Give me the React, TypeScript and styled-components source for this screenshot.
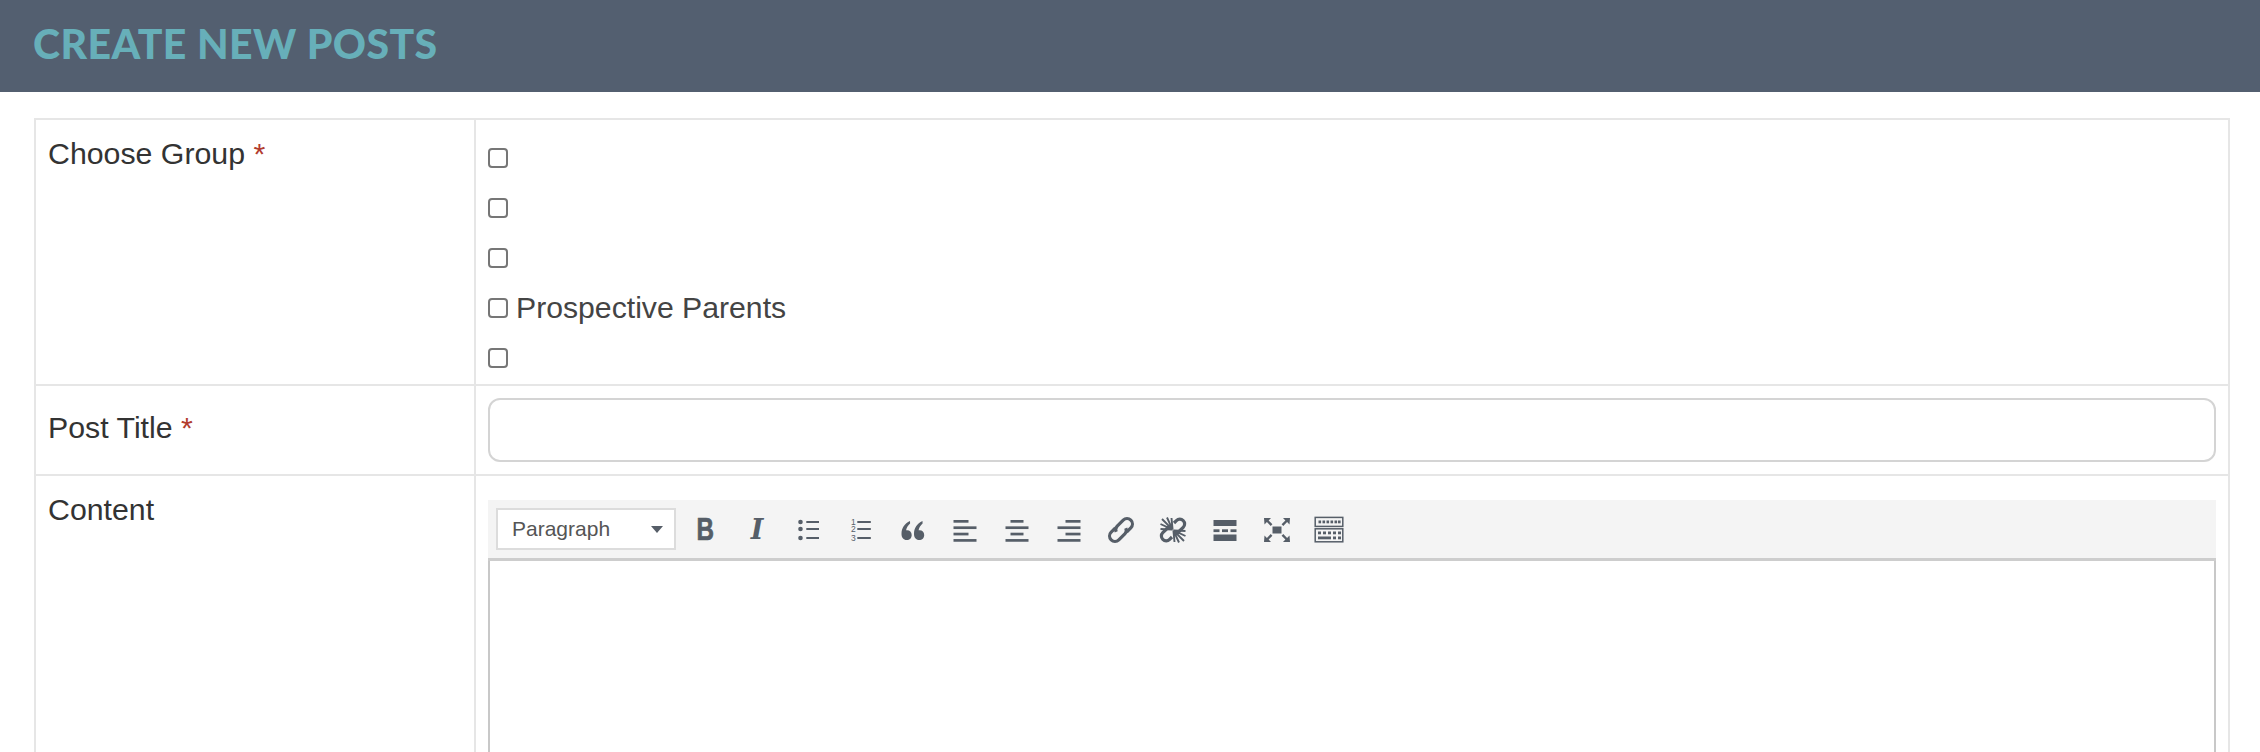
import React from "react";
import styled, { createGlobalStyle } from "styled-components";

const Global = createGlobalStyle`
  html, body { margin: 0; padding: 0; height: 752px; overflow: hidden; background: #fff; }
  body { font-family: "Liberation Sans", Arial, sans-serif; color: #333; }
`;

const Page = styled.div`
  height: 752px;
  overflow: hidden;
  display: flex;
  flex-direction: column;
`;

const Banner = styled.header`
  height: 92px;
  flex: none;
  background: #535f70;
  display: flex;
  align-items: center;
  padding-left: 33px;
`;

const Title = styled.h1`
  margin: 0 0 6px;
  font-family: "Lato", sans-serif;
  font-weight: 900;
  font-size: 41px;
  line-height: 1;
  color: #67afb9;
  text-transform: uppercase;
  letter-spacing: 0.4px;
`;

const FormTable = styled.div`
  margin: 26px 30px 0 34px;
  flex: 1;
  display: grid;
  grid-template-columns: 440px 1fr;
  grid-template-rows: 266px 90px 1fr;
  border: solid #e6e6e6;
  border-width: 2px 2px 0 2px;
  min-height: 0;
`;

const LabelCell = styled.div<{ $top: number; $last?: boolean }>`
  padding: ${(p) => p.$top}px 0 0 12px;
  border-right: 2px solid #e6e6e6;
  border-bottom: ${(p) => (p.$last ? "none" : "2px solid #e6e6e6")};
  font-size: 30.3px;
  line-height: 36px;
  color: #333;
`;

const FieldCell = styled.div<{ $top: number; $last?: boolean }>`
  padding: ${(p) => p.$top}px 12px 0 12px;
  border-bottom: ${(p) => (p.$last ? "none" : "2px solid #e6e6e6")};
  min-width: 0;
`;

const Required = styled.span`
  color: #b23c2e;
`;

const CheckRow = styled.label`
  display: flex;
  align-items: center;
  height: 50px;
  font-size: 30.2px;
  color: #444;
  gap: 8px;
`;

const CheckBox = styled.input.attrs({ type: "checkbox" })`
  appearance: none;
  margin: 0;
  width: 20px;
  height: 20px;
  box-sizing: border-box;
  border: 2px solid #767676;
  border-radius: 4px;
  background: #fff;
`;

const TitleInput = styled.input`
  display: block;
  width: 100%;
  height: 64px;
  box-sizing: border-box;
  border: 2px solid #d4d4d4;
  border-radius: 12px;
  background: #fff;
  outline: none;
`;

const EditorCell = styled.div`
  padding: 24px 12px 0 12px;
  display: flex;
  flex-direction: column;
  min-height: 0;
`;

const Toolbar = styled.div`
  height: 61px;
  box-sizing: border-box;
  flex: none;
  background: #f4f4f4;
  display: flex;
  align-items: center;
  padding-left: 8px;
  border-bottom: 3px solid #cdcdcd;
`;

const FormatSelect = styled.div`
  width: 180px;
  height: 42px;
  box-sizing: border-box;
  flex: none;
  margin-right: 3px;
  background: #fff;
  border: 2px solid #dcdcdc;
  display: flex;
  align-items: center;
  justify-content: space-between;
  padding: 0 11px 0 14px;
  font-size: 21px;
  color: #555;
`;

const Caret = styled.span`
  width: 0;
  height: 0;
  border-left: 6px solid transparent;
  border-right: 6px solid transparent;
  border-top: 7px solid #565e68;
`;

const ToolButton = styled.div`
  width: 52px;
  height: 32px;
  flex: none;
  margin-top: 2px;
  display: flex;
  align-items: center;
  justify-content: center;
  color: #565e68;
  svg { display: block; }
`;

const BoldGlyph = styled.span`
  display: inline-block;
  font-family: "Liberation Sans", sans-serif;
  font-weight: 700;
  font-size: 31px;
  line-height: 32px;
  transform: scaleX(0.78);
  -webkit-text-stroke: 0.7px currentColor;
`;

const ItalicGlyph = styled.span`
  font-family: "DejaVu Serif", serif;
  font-weight: 700;
  font-style: italic;
  font-size: 27px;
  line-height: 32px;
`;

const EditorBody = styled.div`
  flex: 1;
  border: 2px solid #c8c8c8;
  border-top: none;
  border-bottom: none;
  background: #fff;
`;

const Icon = ({ children }: { children: React.ReactNode }) => (
  <svg width="32" height="32" viewBox="0 0 32 32" fill="currentColor">{children}</svg>
);

const Bars = ({ rows }: { rows: [number, number][] }) => (
  <Icon>
    {rows.map(([x, w], i) => (
      <rect key={i} x={x} y={6 + i * 6.35} width={w} height={2.7} />
    ))}
  </Icon>
);

const UlIcon = () => (
  <Icon>
    {[8, 15, 24].map((y) => (
      <g key={y}>
        <circle cx={7.5} cy={y} r={2.3} />
        <rect x={13.3} y={y - 1} width={12.7} height={2} />
      </g>
    ))}
  </Icon>
);

const OlIcon = () => (
  <Icon>
    {[8, 15, 24].map((y, i) => (
      <g key={y}>
        <text x={6} y={y + 3} fontSize="8.5" fontFamily="Liberation Sans, sans-serif">{i + 1}</text>
        <rect x={12.3} y={y - 1} width={13.5} height={2} />
      </g>
    ))}
  </Icon>
);

const QuoteIcon = () => (
  <Icon>
    <g transform="translate(0.5 1)">
      <path d="M12.5 6C7 8.500 4 13 4 19c0 3.500 2 6 5.200 6 3 0 5-2 5-5 0-2.800-2-4.800-4.600-4.800-.4 0-.8 0-1 .1.5-2.700 2-5 4-6.800L12.500 6z" />
      <path d="M25 6c-5.500 2.500-8.500 7-8.500 13 0 3.500 2 6 5.200 6 3 0 5-2 5-5 0-2.800-2-4.800-4.600-4.800-.4 0-.8 0-1 .1.5-2.700 2-5 4-6.800L25 6z" />
    </g>
  </Icon>
);

const LinkIcon = () => (
  <Icon>
    <g fill="none" stroke="currentColor" strokeWidth="3.2" transform="rotate(-45 16 16)">
      <path d="M13.500 10.600H7.500a5.400 5.400 0 0 0 0 10.800h8.500a5.400 5.400 0 0 0 4.800-3.400" />
      <path d="M18.500 21.400H24.500a5.400 5.400 0 0 0 0-10.800h-8.500a5.400 5.400 0 0 0-4.800 3.400" />
    </g>
  </Icon>
);

const UnlinkIcon = () => (
  <Icon>
    <g fill="none" stroke="currentColor" strokeWidth="3.200">
      <path d="M17 9l2.400-2.400a4.800 4.800 0 0 1 6.800 0 4.800 4.800 0 0 1 0 6.800L23 16.500l-3.400 3.400" />
      <path d="M15 23l-2.400 2.400a4.800 4.800 0 0 1-6.800 0 4.800 4.800 0 0 1 0-6.800L9 15.500l3.400-3.400" />
    </g>
    <g stroke="currentColor" strokeWidth="1.900">
      <path d="M15.600 15.600L5 5M15.600 15.600L3.500 10M15.600 15.600L10 3.500M15.600 15.600L3.500 15M15.600 15.600L14.500 4" />
      <path d="M16.400 16.400L27 27M16.400 16.400L28.500 22M16.400 16.400L22 28.500M16.400 16.400L28.500 17M16.400 16.400L17.500 28" />
    </g>
  </Icon>
);

const HrIcon = () => (
  <Icon>
    <rect x={4.500} y={6} width={23} height={6} />
    <rect x={4.500} y={15.300} width={6} height={2.800} />
    <rect x={13} y={15.300} width={6} height={2.800} />
    <rect x={21.500} y={15.300} width={6} height={2.800} />
    <rect x={4.500} y={20.500} width={23} height={6.500} />
  </Icon>
);

const FullscreenIcon = () => (
  <Icon>
    <rect x={11.500} y={12.500} width={9} height={7} />
    <path d="M3 4h7L7.600 6.400l3.800 3.800-1.700 1.700L5.900 8.100 3.500 10.500z" />
    <path d="M29 4h-7l2.400 2.400-3.800 3.800 1.700 1.700 3.800-3.800 2.400 2.400z" />
    <path d="M3 28h7l-2.400-2.400 3.800-3.800-1.700-1.700-3.800 3.800-2.400-2.400z" />
    <path d="M29 28h-7l2.400-2.400-3.800-3.800 1.700-1.700 3.800 3.800 2.400-2.400z" />
  </Icon>
);

const KeyboardIcon = () => (
  <Icon>
    <g fill="none" stroke="currentColor" strokeWidth="1.500">
      <rect x={2.200} y={3.400} width={27.600} height={9} />
      <rect x={2.200} y={14.800} width={27.600} height={13} />
    </g>
    {[5.500, 9.500, 13.500, 17.500, 21.500, 25].map((x) => <rect key={x} x={x} y={6.500} width={2.600} height={2.800} />)}
    {[5, 10, 15, 20, 25].map((x) => <rect key={x} x={x} y={17.500} width={3} height={2.800} />)}
    <rect x={5} y={22.500} width={13} height={2.800} />
    {[20, 25].map((x) => <rect key={x} x={x} y={22.500} width={3} height={2.800} />)}
  </Icon>
);

const groups = ["", "", "", "Prospective Parents", ""];

export default function App() {
  return (
    <Page>
      <Global />
      <Banner>
        <Title>Create New Posts</Title>
      </Banner>
      <FormTable>
        <LabelCell $top={16}>
          Choose Group <Required>*</Required>
        </LabelCell>
        <FieldCell $top={13}>
          {groups.map((g, i) => (
            <CheckRow key={i}>
              <CheckBox />
              {g}
            </CheckRow>
          ))}
        </FieldCell>
        <LabelCell $top={24}>
          Post Title <Required>*</Required>
        </LabelCell>
        <FieldCell $top={12}>
          <TitleInput />
        </FieldCell>
        <LabelCell $top={16} $last>
          Content
        </LabelCell>
        <EditorCell>
          <Toolbar>
            <FormatSelect>
              Paragraph
              <Caret />
            </FormatSelect>
            <ToolButton><BoldGlyph>B</BoldGlyph></ToolButton>
            <ToolButton><ItalicGlyph>I</ItalicGlyph></ToolButton>
            <ToolButton><UlIcon /></ToolButton>
            <ToolButton><OlIcon /></ToolButton>
            <ToolButton><QuoteIcon /></ToolButton>
            <ToolButton><Bars rows={[[4.5, 15], [4.5, 23], [4.5, 15], [4.5, 23]]} /></ToolButton>
            <ToolButton><Bars rows={[[9.5, 13], [4.5, 23], [9.5, 13], [4.5, 23]]} /></ToolButton>
            <ToolButton><Bars rows={[[12.5, 15], [4.5, 23], [12.5, 15], [4.5, 23]]} /></ToolButton>
            <ToolButton><LinkIcon /></ToolButton>
            <ToolButton><UnlinkIcon /></ToolButton>
            <ToolButton><HrIcon /></ToolButton>
            <ToolButton><FullscreenIcon /></ToolButton>
            <ToolButton><KeyboardIcon /></ToolButton>
          </Toolbar>
          <EditorBody />
        </EditorCell>
      </FormTable>
    </Page>
  );
}
